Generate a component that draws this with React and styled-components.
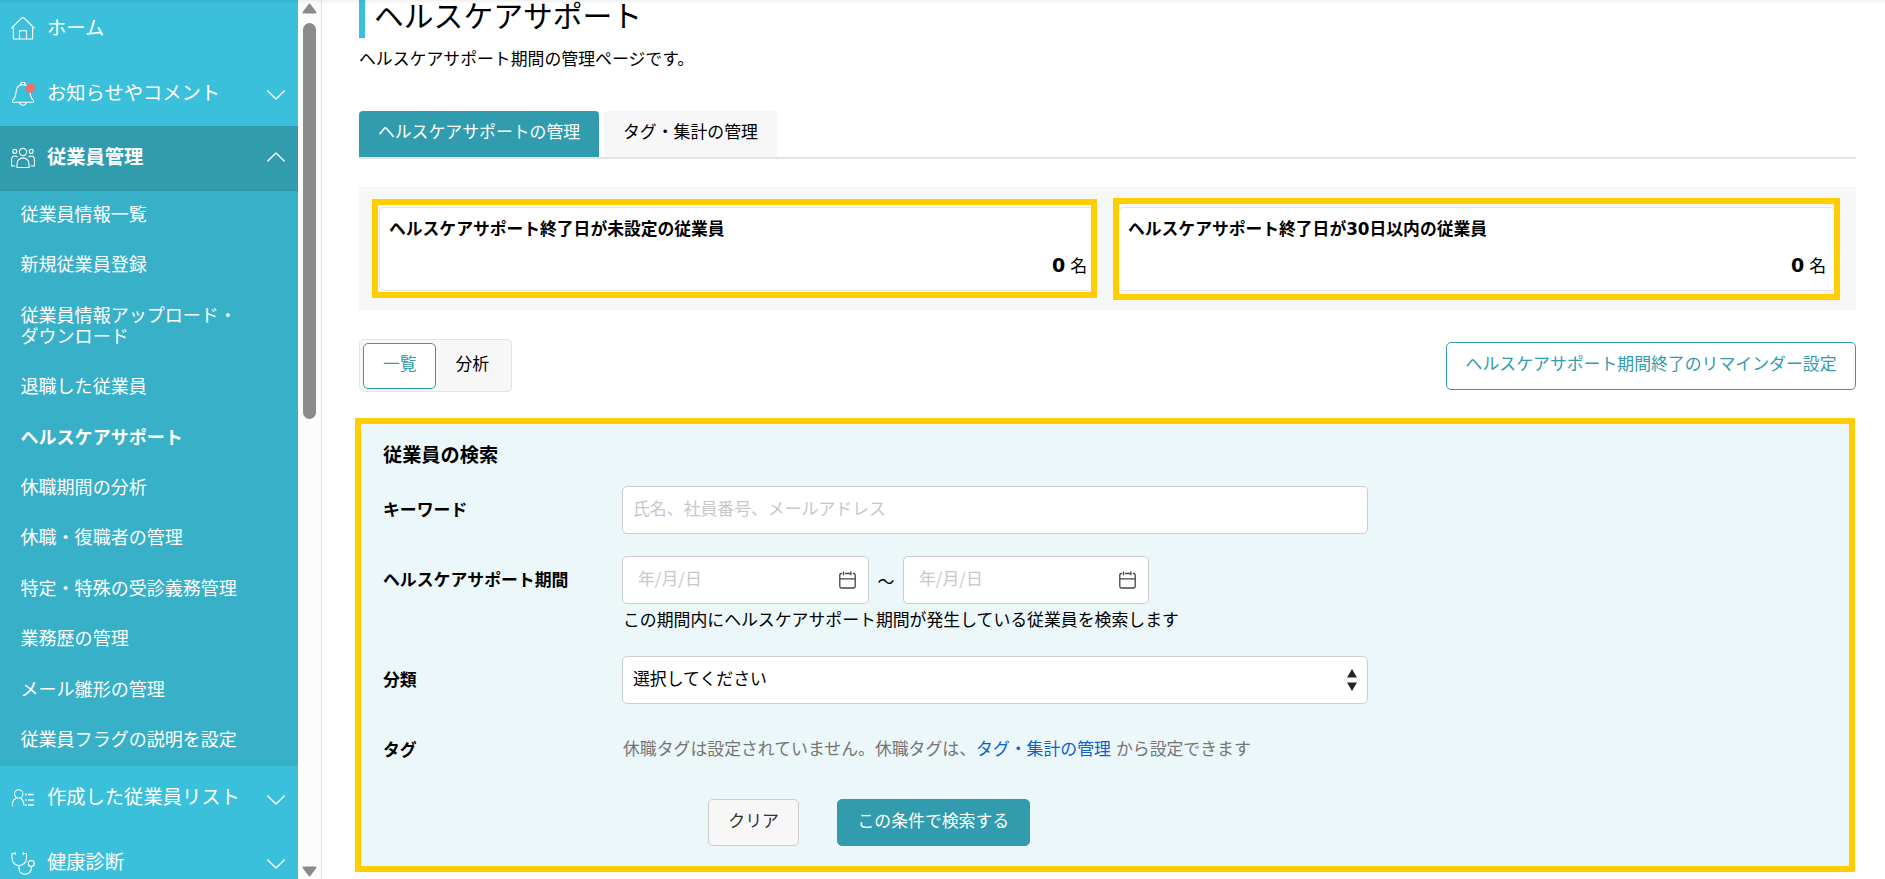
import React from "react";
import styled, { createGlobalStyle, css } from "styled-components";

const teal = "#319cad";
const mark = "#ffcd00";

const GlobalStyle = createGlobalStyle`
  *, *::before, *::after { box-sizing: border-box; }
  html, body { margin: 0; height: 879px; overflow: hidden; background: #fff; }
  body, button, input {
    font-family: "Noto Sans CJK JP", "Noto Sans", sans-serif;
    font-size: 16.86px;
    font-weight: 400;
    line-height: 24px;
    color: #000;
  }
`;

const Page = styled.div`
  position: relative;
  display: flex;
  width: 1885px;
  height: 879px;
  overflow: hidden;
`;
const TopShadow = styled.div`
  position: absolute;
  inset: 0 0 auto 0;
  height: 4px;
  background: linear-gradient(rgba(0, 0, 0, 0.06), rgba(0, 0, 0, 0));
`;

/* ---------- sidebar ---------- */
const Sidebar = styled.nav`
  flex: none;
  width: 298px;
  height: 879px;
  overflow: hidden;
  background: #3bc0dc;
  color: #fff;
`;
const NavList = styled.div`
  display: flex;
  flex-direction: column;
  margin-top: -3px;
`;
const NavRow = styled.div`
  flex: none;
  display: flex;
  align-items: center;
  gap: 12px;
  height: 64.6px;
  padding: 0 13.5px 0 11px;
  font-size: 19.3px;
  font-weight: ${(p) => (p.$open ? 700 : 400)};
  background: ${(p) => (p.$open ? teal : "transparent")};
  border-bottom: ${(p) => (p.$open ? "1px solid #2e93a4" : "0")};
  svg { flex: none; display: block; }
`;
const NavLabel = styled.span`
  flex: 1;
  padding-bottom: 4.6px;
  white-space: nowrap;
`;
const ChevronSlot = styled.span`
  padding-top: ${(p) => (p.$up ? 0 : 3)}px;
  padding-bottom: ${(p) => (p.$up ? 2 : 0)}px;
`;
const SubList = styled.div`
  height: 575.2px;
  background: #38b0c8;
`;
const SubItem = styled.div`
  padding: 12.3px 0 17.1px 20.5px;
  font-size: 18.05px;
  line-height: 21px;
  font-weight: ${(p) => (p.$active ? 700 : 400)};
  white-space: pre-line;
`;
const Gutter = styled.div`
  flex: none;
  display: flex;
  flex-direction: column;
  align-items: center;
  width: 24px;
  height: 879px;
  padding: 3px 1px 2px 0;
  background: #fcfcfc;
  border-right: 1px solid #e4e4e6;
  svg { display: block; }
`;
const Thumb = styled.div`
  width: 13px;
  height: 396px;
  margin: 9px 0 auto;
  border-radius: 7px;
  background: #8b8b8b;
`;

/* ---------- main ---------- */
const Main = styled.main`
  width: 1534px;
  padding: 0 0 0 37px;
`;
const Title = styled.h1`
  height: 38px;
  margin: 0;
  padding: 0 0 0 9px;
  border-left: 6px solid #3bc0dc;
  font-size: 29.8px;
  font-weight: 400;
  line-height: 28px;
`;
const Lead = styled.p`
  margin: 8px 0 0;
  height: 65px;
`;
const Tabs = styled.div`
  display: flex;
  gap: 5px;
  height: 48px;
  border-bottom: 2px solid #e4e4e4;
`;
const Tab = styled.div`
  height: 46px;
  padding: 8px 18.9px 0;
  border-radius: 4px 4px 0 0;
  background: ${(p) => (p.$active ? teal : "#f7f7f7")};
  color: ${(p) => (p.$active ? "#fff" : "#000")};
`;
const Summary = styled.section`
  display: flex;
  gap: 21px;
  height: 123px;
  margin-top: 28px;
  padding: 20px 20px 19px;
  background: #f7f7f7;
`;
const Card = styled.div`
  position: relative;
  flex: 1;
  height: 84px;
  padding: 8px 9px 0;
  border: 1px solid #e5e5e8;
  border-radius: 6px;
  background: #fff;
`;
const CardMark = styled.div`
  position: absolute;
  border: 6px solid ${mark};
  ${(p) =>
    p.$first
      ? css`inset: -9px -1px -8px -8px;`
      : css`inset: -10px -5px -10px -6px;`}
`;
const CardTitle = styled.div`
  font-size: 16.8px;
  font-weight: 700;
`;
const Digits = styled.span`
  font-family: "DejaVu Sans", sans-serif;
  font-weight: 700;
  line-height: 1;
  font-size: ${(p) => p.$size || "inherit"};
`;
const CardCount = styled.div`
  display: flex;
  justify-content: flex-end;
  align-items: baseline;
  gap: 5px;
  margin-top: 13px;
`;
const Toolbar = styled.div`
  display: flex;
  justify-content: space-between;
  align-items: flex-start;
  height: 79px;
  margin-top: 29px;
`;
const Toggle = styled.div`
  display: flex;
  width: 153px;
  height: 53px;
  padding: 3px;
  border: 1px solid #e4e4e4;
  border-radius: 5px;
  background: #f7f7f7;
`;
const ToggleItem = styled.div`
  width: 74px;
  height: 46px;
  padding: 7px 0 0 1px;
  text-align: center;
  border-radius: 5px;
  border: 1px solid ${(p) => (p.$active ? teal : "transparent")};
  background: ${(p) => (p.$active ? "#fff" : "transparent")};
  color: ${(p) => (p.$active ? teal : "#000")};
`;
const Button = styled.button`
  height: 47px;
  padding: 0 19.3px 6px;
  border-radius: 5px;
  white-space: nowrap;
  border: 1px solid ${teal};
  background: ${teal};
  color: #fff;
  ${(p) =>
    p.$kind === "outline" &&
    css`height: 48px; margin-top: 3px; padding: 0 18.5px 7px; background: #fff; color: ${teal};`}
  ${(p) =>
    p.$kind === "plain" &&
    css`border-color: #ccc; background: #f7f7f7; color: #333;`}
`;

/* ---------- search ---------- */
const Search = styled.section`
  height: 454px;
  margin: 0 1px 0 -4px;
  padding: 17px 0 0 22px;
  border: 6px solid ${mark};
  background: #ebf7f9;
`;
const SearchTitle = styled.h2`
  margin: 0;
  height: 45px;
  font-size: 19.2px;
  line-height: 26px;
`;
const Field = styled.div`
  display: flex;
  align-items: flex-start;
  height: ${(p) => p.$h}px;
`;
const Label = styled.div`
  width: 239px;
  padding-top: 10.5px;
  font-weight: 700;
`;
const Box = styled.div`
  display: flex;
  align-items: center;
  justify-content: space-between;
  width: ${(p) => p.$w}px;
  height: 48px;
  padding: ${(p) => p.$pad || "0 10px"};
  border: 1px solid #ccc;
  border-radius: 5px;
  background: #fff;
  svg { flex: none; display: block; }
`;
const BoxText = styled.span`
  padding-bottom: ${(p) => (p.$muted ? 4 : 5)}px;
  color: ${(p) => (p.$muted ? "#c8c8c8" : "#000")};
`;
const Range = styled.div`
  display: flex;
  align-items: center;
`;
const Tilde = styled.span`
  width: 34px;
  padding-top: 1px;
  text-align: center;
`;
const Help = styled.div`
  padding: 3px 0 0 1px;
`;
const Note = styled.div`
  padding: 10px 0 0 1px;
  color: #757575;
`;
const Link = styled.a`
  margin-right: 5px;
  color: #0b62cf;
`;
const Actions = styled.div`
  display: flex;
  gap: 38px;
  padding-left: 325px;
`;

/* ---------- icons ---------- */
const Svg = ({ children, w = 24, h = 24, sw = 1.1, color = "#fff" }) => (
  <svg width={w} height={h} viewBox={`0 0 ${w} ${h}`} fill="none" stroke={color}
    strokeWidth={sw} strokeLinecap="round" strokeLinejoin="round">
    {children}
  </svg>
);
const HomeIcon = () => (
  <Svg>
    <path d="M.7 11 10.600 1.200a1.800 1.800 0 0 1 2.600 0l9.900 9.800M2.400 9.800v12.200h19.200V9.800" />
    <path d="M8.500 22v-8.300h7V22" />
  </Svg>
);
const BellIcon = () => (
  <Svg>
    <path d="M9.900 2.900V2.200a2.100 2.100 0 0 1 4.200 0v.7M12 2.800c-4 0-6.600 2.800-6.900 6.900-.3 4.400-1 6.100-3 8.100-.9.9-1.100 2.500.2 2.500h19.400c1.300 0 1.100-1.600.2-2.500-2-2-2.700-3.700-3-8.100-.3-4.100-2.900-6.900-6.900-6.900ZM8.800 20.500c.3 1.700 1.500 2.700 3.200 2.700s2.900-1 3.200-2.700" />
    <circle cx="19.400" cy="6.300" r="4.600" fill="#f2706b" stroke="none" />
  </Svg>
);
const PeopleIcon = () => (
  <Svg>
    <circle cx="12" cy="6" r="3.600" />
    <circle cx="3.800" cy="5.400" r="2" />
    <circle cx="20.200" cy="5.400" r="2" />
    <path d="M6 21.500v-3.600a6 6 0 0 1 12 0v3.600ZM3.800 20H.6v-6.200c0-2.300 1.400-3.800 3.200-3.800 1 0 1.800.300 2.300.900M20.200 20h3.200v-6.200c0-2.300-1.400-3.800-3.200-3.800-1 0-1.800.300-2.300.900" />
  </Svg>
);
const ListIcon = () => (
  <Svg>
    <circle cx="7.700" cy="8" r="4.200" />
    <path d="M1.400 20v-1.700c0-2.800 1.600-5 4-6.200M13 19.300c-.4-3-1.300-5.700-3.100-7.100" />
    <path d="M17 8.500h6M17 14h6M17 19h6M14.200 8.500h1.500M14.200 14h1.500M14.200 19h1.500" strokeWidth="1.500" strokeLinecap="butt" />
  </Svg>
);
const StethoscopeIcon = () => (
  <Svg>
    <path d="M4.200 1.300v2.400M4.200 2.500H1v4.700c0 4.400 3 7.300 7 7.300s7.500-2.900 7.500-7.300V2.500h-3.200M12.300 1.300v2.400" />
    <path d="M8 14.500v2.800c0 3.700 2.600 6 6 6s6.300-2.300 6.300-6v-1.700" />
    <circle cx="20.300" cy="12.500" r="3" />
  </Svg>
);
const Chevron = ({ up }) => (
  <ChevronSlot $up={up}>
    <Svg w={18} h={10} sw={1.400}>
      <path d={up ? "M.8 9 9 1l8.200 8" : "M.8 1 9 9l8.200-8"} />
    </Svg>
  </ChevronSlot>
);
const CalendarIcon = () => (
  <Svg w={17} h={18} sw={1.300} color="#444">
    <path d="M2.600 2.500H2.200A1.400 1.400 0 0 0 .8 3.900v11.700A1.400 1.400 0 0 0 2.200 17h12.600a1.400 1.400 0 0 0 1.400-1.400V3.900a1.400 1.400 0 0 0-1.400-1.400h-.4M6.500 2.500h4.200M.8 7.800h15.400M4.500.8v3M11.900.8v3" />
  </Svg>
);
const SortIcon = () => (
  <svg width="10" height="22" viewBox="0 0 10 22" fill="#212529">
    <path d="M5 0 10 8.500H0ZM5 22 0 13.500h10Z" />
  </svg>
);
const ScrollArrow = ({ down }) => (
  <svg width="15" height="11" viewBox="0 0 15 11" fill="#8b8b8b" stroke="#8b8b8b" strokeWidth="2" strokeLinejoin="round">
    <path d={down ? "M1.500 1.500h12L7.500 9.500Z" : "M1.500 9.500h12L7.500 1.500Z"} />
  </svg>
);

const subItems = [
  "従業員情報一覧",
  "新規従業員登録",
  "従業員情報アップロード・\nダウンロード",
  "退職した従業員",
  "ヘルスケアサポート",
  "休職期間の分析",
  "休職・復職者の管理",
  "特定・特殊の受診義務管理",
  "業務歴の管理",
  "メール雛形の管理",
  "従業員フラグの説明を設定",
];

const NavItem = ({ icon, label, open, chevron = true }) => (
  <NavRow $open={open}>
    {icon}
    <NavLabel>{label}</NavLabel>
    {chevron && <Chevron up={open} />}
  </NavRow>
);

const DateBox = ({ w }) => (
  <Box $w={w} $pad="0 12px 0 15px">
    <BoxText $muted>年/月/日</BoxText>
    <CalendarIcon />
  </Box>
);

const SummaryCard = ({ title, first }) => (
  <Card>
    <CardTitle>{title}</CardTitle>
    <CardCount>
      <Digits $size="19px">0</Digits>
      <span>名</span>
    </CardCount>
    <CardMark $first={first} />
  </Card>
);

export default function App() {
  return (
    <Page>
      <GlobalStyle />
      <Sidebar>
        <NavList>
          <NavItem icon={<HomeIcon />} label="ホーム" chevron={false} />
          <NavItem icon={<BellIcon />} label="お知らせやコメント" />
          <NavItem icon={<PeopleIcon />} label="従業員管理" open />
          <SubList>
            {subItems.map((t) => (
              <SubItem key={t} $active={t === "ヘルスケアサポート"}>{t}</SubItem>
            ))}
          </SubList>
          <NavItem icon={<ListIcon />} label="作成した従業員リスト" />
          <NavItem icon={<StethoscopeIcon />} label="健康診断" />
        </NavList>
      </Sidebar>
      <Gutter>
        <ScrollArrow />
        <Thumb />
        <ScrollArrow down />
      </Gutter>
      <Main>
        <Title>ヘルスケアサポート</Title>
        <Lead>ヘルスケアサポート期間の管理ページです。</Lead>
        <Tabs>
          <Tab $active>ヘルスケアサポートの管理</Tab>
          <Tab>タグ・集計の管理</Tab>
        </Tabs>
        <Summary>
          <SummaryCard first title="ヘルスケアサポート終了日が未設定の従業員" />
          <SummaryCard title={<>ヘルスケアサポート終了日が<Digits>30</Digits>日以内の従業員</>} />
        </Summary>
        <Toolbar>
          <Toggle>
            <ToggleItem $active>一覧</ToggleItem>
            <ToggleItem>分析</ToggleItem>
          </Toggle>
          <Button $kind="outline">ヘルスケアサポート期間終了のリマインダー設定</Button>
        </Toolbar>
        <Search>
          <SearchTitle>従業員の検索</SearchTitle>
          <Field $h={70}>
            <Label>キーワード</Label>
            <Box $w={746}>
              <BoxText $muted>氏名、社員番号、メールアドレス</BoxText>
            </Box>
          </Field>
          <Field $h={100}>
            <Label>ヘルスケアサポート期間</Label>
            <div>
              <Range>
                <DateBox w={247} />
                <Tilde>～</Tilde>
                <DateBox w={246} />
              </Range>
              <Help>この期間内にヘルスケアサポート期間が発生している従業員を検索します</Help>
            </div>
          </Field>
          <Field $h={70}>
            <Label>分類</Label>
            <Box $w={746}>
              <BoxText>選択してください</BoxText>
              <SortIcon />
            </Box>
          </Field>
          <Field $h={73}>
            <Label>タグ</Label>
            <Note>
              休職タグは設定されていません。休職タグは、<Link>タグ・集計の管理</Link>から設定できます
            </Note>
          </Field>
          <Actions>
            <Button $kind="plain">クリア</Button>
            <Button>この条件で検索する</Button>
          </Actions>
        </Search>
      </Main>
      <TopShadow />
    </Page>
  );
}
